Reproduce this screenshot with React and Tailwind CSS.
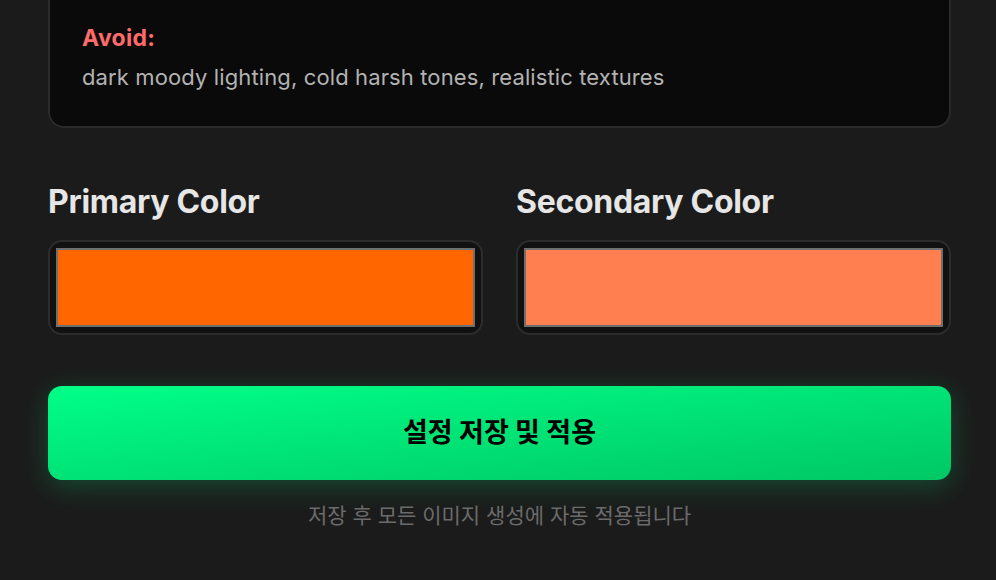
import React from 'react';

const font = { fontFamily: 'Inter, "Noto Sans CJK KR", sans-serif' };

function ColorField({ label, value }) {
  return (
    <div className="flex flex-col">
      <label className="text-[32px] leading-[36px] font-bold text-[#e6e6e6] tracking-[-0.3px]">{label}</label>
      <div className="mt-[20px] h-[95px] rounded-[14px] border-2 border-[#2c2c2c] bg-[#111111] p-[6px] flex">
        <div className="flex-1 border-2 border-[#6e7070]" style={{ background: value }} />
      </div>
    </div>
  );
}

export default function App() {
  return (
    <div className="w-[996px] h-[580px] overflow-hidden bg-[#1b1b1b] pl-12 pr-[45px]" style={font}>
      {/* Avoid card (top cut off by scroll) */}
      <div className="-mt-6 rounded-[16px] border-2 border-[#2a2a2a] bg-[#0a0a0a] px-[32px] pt-[46px] pb-[34px]">
        <p className="text-[23px] leading-[28px] font-bold tracking-[0.3px] text-[#ff6b6b]">Avoid:</p>
        <p className="mt-[10px] text-[22px] leading-[30px] tracking-[0.12px] text-[#b3b3b3]">
          dark moody lighting, cold harsh tones, realistic textures
        </p>
      </div>

      <div className="mt-[56px] grid grid-cols-2 gap-[33px]">
        <ColorField label="Primary Color" value="#ff6600" />
        <ColorField label="Secondary Color" value="#ff7f50" />
      </div>

      <button className="mt-[51px] w-full h-[94px] rounded-[14px] bg-gradient-to-br from-[#00ff88] to-[#00c864] shadow-[0_6px_28px_rgba(0,255,136,0.22)] text-[27px] font-bold text-black">
        설정 저장 및 적용
      </button>

      <p className="mt-[21px] text-center text-[21px] leading-[30px] text-[#6b6b6b]">
        저장 후 모든 이미지 생성에 자동 적용됩니다
      </p>
    </div>
  );
}
